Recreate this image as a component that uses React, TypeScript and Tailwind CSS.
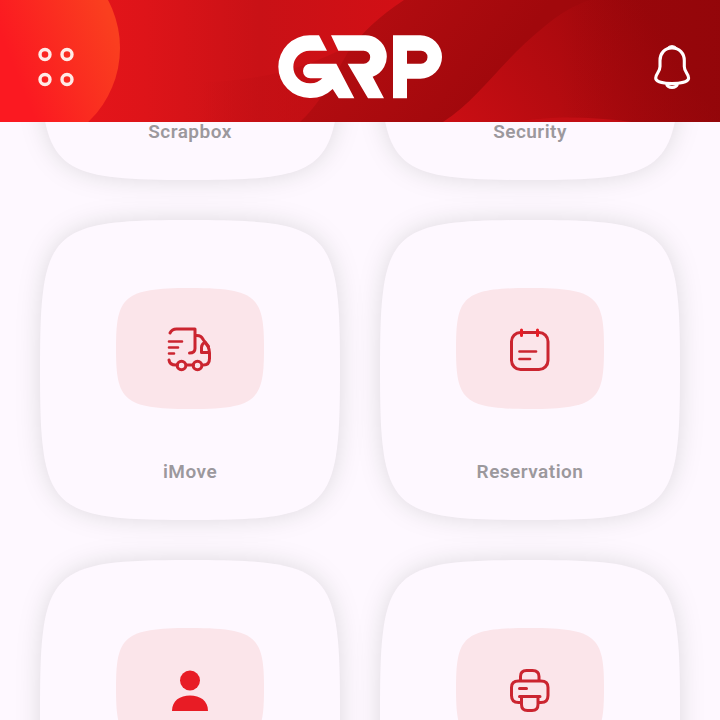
import type { ReactNode } from "react";

function HeaderArt() {
  return (
    <svg
      aria-hidden="true"
      className="absolute inset-0 h-full w-full"
      viewBox="0 0 720 122"
      preserveAspectRatio="none"
    >
      <defs>
        <linearGradient id="base" x1="0" x2="1" y1="0" y2="0">
          <stop offset="0" stopColor="#ee161c" />
          <stop offset="0.2" stopColor="#de1419" />
          <stop offset="0.36" stopColor="#c91116" />
          <stop offset="0.56" stopColor="#d20f15" />
        </linearGradient>
        <linearGradient id="fold" gradientUnits="userSpaceOnUse" x1="200" x2="350" y1="0" y2="0">
          <stop offset="0" stopColor="#c20e13" stopOpacity="0" />
          <stop offset="1" stopColor="#bd0e13" />
        </linearGradient>
        <linearGradient id="band" gradientUnits="userSpaceOnUse" x1="370" x2="480" y1="20" y2="100">
          <stop offset="0" stopColor="#b20c10" />
          <stop offset="1" stopColor="#a1080c" />
        </linearGradient>
        <linearGradient id="slope" gradientUnits="userSpaceOnUse" x1="450" x2="640" y1="130" y2="0">
          <stop offset="0" stopColor="#cb0e14" />
          <stop offset="0.45" stopColor="#b50b10" />
          <stop offset="1" stopColor="#9c070b" />
        </linearGradient>
        <linearGradient id="shade" gradientUnits="userSpaceOnUse" x1="560" x2="720" y1="0" y2="0">
          <stop offset="0" stopColor="#8e0509" stopOpacity="0" />
          <stop offset="1" stopColor="#8e0509" stopOpacity="0.6" />
        </linearGradient>
        <linearGradient id="sun" gradientUnits="userSpaceOnUse" x1="15" x2="115" y1="70" y2="30">
          <stop offset="0" stopColor="#fb1921" />
          <stop offset="1" stopColor="#fa3f1f" />
        </linearGradient>
      </defs>
      <rect width="720" height="122" fill="url(#base)" />
      <path d="M200 82C260 82 320 66 372 32V122H200Z" fill="url(#fold)" />
      <path d="M404 0C380 16 362 32 348 52C332 80 318 106 300 122H720V0Z" fill="url(#band)" />
      <path d="M443 122C480 98 500 62 545 26C558 15 574 5 590 0H720V122Z" fill="url(#slope)" />
      <rect x="560" width="160" height="122" fill="url(#shade)" />
      <path d="M515 122C545 116 590 116 632 122Z" fill="#c30e14" />
      <circle cx="18" cy="48" r="102" fill="url(#sun)" />
    </svg>
  );
}

function Logo() {
  return (
    <svg role="img" aria-label="GRP" className="h-[65px] w-[167px]" viewBox="50 43 501 195" fill="#fff">
      <path d="M176 44H148A94 94 0 0 0 148 232A94 94 0 0 0 217 205L235 233H282L228 129H150A22 22 0 0 0 150 173H186A48 48 0 0 1 148 188A49 49 0 0 1 148 90H200Z" />
      <path d="M212 44H310A64 64 0 0 1 337 168L371 233H323L262 129H310A19 19 0 0 0 310 90H234Z" />
      <path fillRule="evenodd" d="M398 44H480A65 65 0 0 1 480 174H440V233H398ZM440 90V129H482A19 19 0 0 0 482 90Z" />
    </svg>
  );
}

function MenuIcon() {
  return (
    <svg aria-hidden="true" className="size-10" viewBox="0 0 40 40" fill="none" stroke="#ffeae6" strokeWidth="3.4">
      <circle cx="9" cy="7.5" r="5" />
      <circle cx="31" cy="7.5" r="5" />
      <circle cx="9" cy="32.5" r="5" />
      <circle cx="31" cy="32.5" r="5" />
    </svg>
  );
}

function BellIcon() {
  return (
    <svg
      aria-hidden="true"
      className="h-12 w-10"
      viewBox="0 0.5 40 48"
      fill="none"
      stroke="#fff"
      strokeWidth="3.1"
      strokeLinejoin="round"
    >
      <path d="M20 5.500C12.500 5.500 8 11 8 18V24C8 30 3.700 31 3.700 35.500C3.700 39.500 12 41 20 41S36.600 39.500 36.600 35.500C36.600 31 32.300 30 32.300 24V18C32.300 11 27.500 5.500 20 5.500Z" />
      <path d="M14.500 6.500C16 2 24 2 25.500 6.500C22 5 18 5 14.500 6.500Z" fill="#fff" strokeWidth="1" />
      <path d="M14.500 41.500C16 46 24 46 25.500 41.500" />
    </svg>
  );
}

function LineIcon({ children }: { children?: ReactNode }) {
  return (
    <svg
      aria-hidden="true"
      className="relative size-12"
      viewBox="0.5 0.5 48 48"
      fill="none"
      stroke="#cb2530"
      strokeWidth="3"
      strokeLinecap="round"
      strokeLinejoin="round"
    >
      {children}
    </svg>
  );
}

const truck = (
  <LineIcon>
    <path d="M4.500 8.500C6 5.500 8 4.500 11 4.500H29.500V24C29.500 27 28 28.500 24 28.500" />
    <path d="M30 11C35.500 10.500 36.500 13 38 15.500L42.500 22C43.500 24 44 26 44 29V34C44 38 42 40.500 38 40.500M12 40.500C7 41 4 39.500 3.500 35.500M21 40.500H28" />
    <path d="M43 22L39.500 17.500C37 19 36 20 36 23V28H43.500" />
    <path d="M3.500 17H16.500M3.500 23H12.500M3.500 29H8.500" strokeWidth="2.600" />
    <circle cx="16" cy="41" r="4.300" />
    <circle cx="32" cy="41" r="4.300" />
  </LineIcon>
);

const calendar = (
  <LineIcon>
    <rect x="6" y="8" width="36.500" height="37" rx="9" />
    <path d="M16 5.500V11M32 5.500V11" stroke="#e81c25" />
    <path d="M14 27H30.500M14 34.500H24.500" strokeWidth="2.700" />
  </LineIcon>
);

const person = (
  <svg aria-hidden="true" className="relative size-12" viewBox="0 0.500 48 48" fill="#e81c25">
    <circle cx="24" cy="16" r="10" />
    <path d="M6 46.500C6 36 14 31 24 31S42 36 42 46.500Z" />
  </svg>
);

const printer = (
  <LineIcon>
    <path d="M15 16V12C15 8 17 6 21 6H27C31 6 33.500 8 33.500 12V16" />
    <path d="M15 38H13C8.500 38 6 35.500 6 31V23C6 18.500 8.500 16.500 13 16.500H35.500C40 16.500 42.500 18.500 42.500 23V31C42.500 35.500 40 38 35.500 38H33" />
    <path d="M14 32H34.500M16 32V40C16 44 18 46 22 46H26.500C30.500 46 32.500 44 32.500 40V32M14 24H21" />
  </LineIcon>
);

const trash = (
  <LineIcon>
    <path d="M8 12H40M18 12V6H30V12M12 12L14 43H34L36 12" />
  </LineIcon>
);

const shield = (
  <LineIcon>
    <path d="M24 4L41 11V23C41 33 34 41 24 44C14 41 7 33 7 23V11Z" />
  </LineIcon>
);

type Service = { name: string; icon: ReactNode; captioned: boolean };

const services: Service[] = [
  { name: "Scrapbox", icon: trash, captioned: true },
  { name: "Security", icon: shield, captioned: true },
  { name: "iMove", icon: truck, captioned: true },
  { name: "Reservation", icon: calendar, captioned: true },
  { name: "Profile", icon: person, captioned: false },
  { name: "Printer", icon: printer, captioned: false },
];

function ServiceCard({ name, icon, captioned }: Service) {
  return (
    <button
      type="button"
      aria-label={name}
      className="relative flex aspect-square w-full flex-col items-center justify-start pt-[68px]"
    >
      <svg
        aria-hidden="true"
        className="absolute inset-0 h-full w-full overflow-visible drop-shadow-[0_0_12px_rgba(0,20,0,0.13)]"
        viewBox="0 0 300 300"
        preserveAspectRatio="none"
        fill="#fef8ff"
      >
        <path d="M0 150C0 9 9 0 150 0S300 9 300 150S291 300 150 300S0 291 0 150Z" />
      </svg>
      <span className="relative flex h-[121px] w-[148px] items-center justify-center">
        <svg aria-hidden="true" className="absolute inset-0 h-full w-full" viewBox="0 0 148 121" fill="#fbe5ea">
          <path d="M0 60.500C0 9 7 0 74 0S148 9 148 60.500S141 121 74 121S0 112 0 60.500Z" />
        </svg>
        {icon}
      </span>
      {captioned && (
        <span className="relative mt-[51px] text-[19px] leading-6 font-semibold tracking-wide text-[#9c989d]">
          {name}
        </span>
      )}
    </button>
  );
}

export default function App() {
  return (
    <div className="flex h-screen flex-col overflow-hidden bg-[#fef8ff] font-[Roboto,sans-serif]">
      <header className="relative z-10 h-[122px] shrink-0 overflow-hidden">
        <HeaderArt />
        <div className="relative flex h-full items-center justify-between px-7 pt-3">
          <button type="button" aria-label="Menu" className="flex w-14 justify-center">
            <MenuIcon />
          </button>
          <Logo />
          <button type="button" aria-label="Notifications" className="flex w-14 justify-end">
            <BellIcon />
          </button>
        </div>
      </header>
      <main className="min-h-0 flex-1 overflow-hidden">
        <div className="-mt-[242px] grid grid-cols-2 gap-10 px-10">
          {services.map((service) => (
            <ServiceCard key={service.name} {...service} />
          ))}
        </div>
      </main>
    </div>
  );
}
